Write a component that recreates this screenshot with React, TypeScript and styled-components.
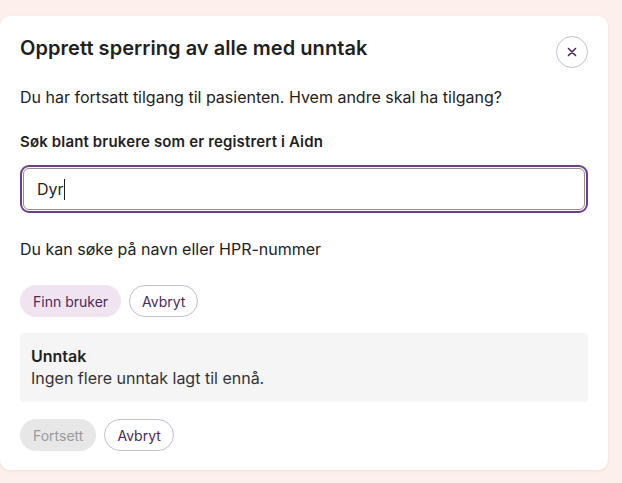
import React from 'react';
import styled, { createGlobalStyle } from 'styled-components';

const GlobalStyle = createGlobalStyle`
    html, body {
        margin: 0;
        padding: 0;
        background: #fdf0ec;
        font-family: Inter, "Noto Sans", sans-serif;
        color: #1f1f1f;
    }
`;

const Page = styled.div`
    padding: 16px 14px 14px 0;
`;

const Card = styled.div`
    background: #ffffff;
    border-radius: 10px;
    box-shadow: 0 1px 3px rgba(120, 80, 70, 0.12);
    padding: 20px 20px 19px 20px;
    display: flex;
    flex-direction: column;
`;

const Header = styled.div`
    display: flex;
    justify-content: space-between;
    align-items: flex-start;
`;

const Title = styled.h2`
    margin: 0;
    font-size: 20px;
    line-height: 24px;
    font-weight: 600;
    letter-spacing: 0.05px;
`;

const CloseButton = styled.button`
    width: 32px;
    height: 32px;
    border-radius: 50%;
    border: 1px solid #cbbfd0;
    background: #fff;
    display: flex;
    align-items: center;
    justify-content: center;
    padding: 0;
    color: #4b2a5c;
`;

const Text = styled.p<{ $top: number }>`
    margin: ${p => p.$top}px 0 0 0;
    font-size: 16px;
    line-height: 22px;
    color: #222;
`;

const Label = styled.label`
    display: block;
    margin-top: 24px;
    font-size: 15px;
    line-height: 20px;
    font-weight: 600;
    letter-spacing: 0.15px;
`;

const InputWrap = styled.div`
    margin-top: 13px;
    height: 48px;
    box-sizing: border-box;
    border: 2px solid #6d3f8a;
    border-radius: 9px;
    padding: 1px;
`;

const Input = styled.div`
    height: 100%;
    box-sizing: border-box;
    border: 1px solid #8e8e8e;
    border-radius: 6px;
    display: flex;
    align-items: center;
    padding-left: 13px;
    font-size: 16px;
    color: #1f1f1f;
`;

const Caret = styled.span`
    display: inline-block;
    width: 1px;
    height: 21px;
    background: #1f1f1f;
`;

const Row = styled.div<{ $top: number }>`
    display: flex;
    gap: 8px;
    margin-top: ${p => p.$top}px;
`;

const Pill = styled.button<{ $variant: 'primary' | 'outline' | 'disabled' }>`
    height: 32px;
    box-sizing: border-box;
    border-radius: 16px;
    padding: 0 12px;
    font-family: inherit;
    font-size: 14px;
    border: 1px solid ${p => (p.$variant === 'outline' ? '#c9bdd0' : 'transparent')};
    background: ${p =>
        p.$variant === 'primary' ? '#efe4f0' : p.$variant === 'disabled' ? '#e7e7e7' : '#ffffff'};
    color: ${p => (p.$variant === 'disabled' ? '#9a9a9a' : '#4b2a5c')};
`;

const ExceptionBox = styled.div`
    margin-top: 16px;
    background: #f5f5f5;
    border-radius: 4px;
    padding: 12px 11px 13px 11px;
`;

const BoxTitle = styled.div`
    font-size: 16px;
    line-height: 22px;
    font-weight: 600;
`;

const BoxText = styled.div`
    font-size: 16px;
    line-height: 22px;
    color: #333;
`;

const App = () => (
    <>
        <GlobalStyle />
        <Page>
            <Card>
                <Header>
                    <Title>Opprett sperring av alle med unntak</Title>
                    <CloseButton aria-label="Lukk">
                        <svg width="12" height="12" viewBox="0 0 12 12">
                            <path d="M2.5 2.5 L9.5 9.5 M9.5 2.5 L2.5 9.5" stroke="#4b2a5c" strokeWidth="1.6" strokeLinecap="round" />
                        </svg>
                    </CloseButton>
                </Header>
                <Text $top={18}>Du har fortsatt tilgang til pasienten. Hvem andre skal ha tilgang?</Text>
                <Label>Søk blant brukere som er registrert i Aidn</Label>
                <InputWrap>
                    <Input>
                        Dyr<Caret />
                    </Input>
                </InputWrap>
                <Text $top={25}>Du kan søke på navn eller HPR-nummer</Text>
                <Row $top={25}>
                    <Pill $variant="primary">Finn bruker</Pill>
                    <Pill $variant="outline">Avbryt</Pill>
                </Row>
                <ExceptionBox>
                    <BoxTitle>Unntak</BoxTitle>
                    <BoxText>Ingen flere unntak lagt til ennå.</BoxText>
                </ExceptionBox>
                <Row $top={17}>
                    <Pill $variant="disabled">Fortsett</Pill>
                    <Pill $variant="outline">Avbryt</Pill>
                </Row>
            </Card>
        </Page>
    </>
);

export default App;
